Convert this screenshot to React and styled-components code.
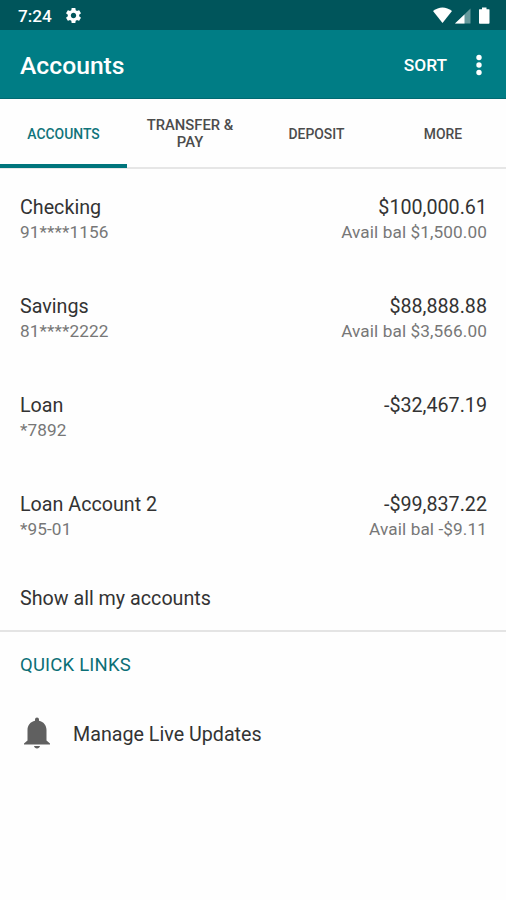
import React from "react";
import styled, { createGlobalStyle } from "styled-components";

const GlobalStyle = createGlobalStyle`
  * { box-sizing: border-box; }
  body { margin: 0; background: #fefefe; font-family: Roboto, sans-serif; }
`;

const Screen = styled.div`
  width: 506px;
  height: 900px;
  display: flex;
  flex-direction: column;
  background: #fefefe;
  overflow: hidden;
  white-space: nowrap;
`;

const StatusBar = styled.header`
  height: 30px;
  flex: none;
  display: flex;
  align-items: center;
  padding: 1px 15px 0 18px;
  background: #00555b;
  color: #fff;
`;

const Clock = styled.span`
  width: 46px;
  font-size: 17.2px;
  font-weight: 500;
  line-height: 20px;
`;

const StatusIcons = styled.div`
  margin-left: auto;
  display: flex;
`;

const AppBar = styled.div`
  height: 69px;
  flex: none;
  display: flex;
  align-items: center;
  padding: 2px 24px 0 20px;
  background: #007d85;
  border-bottom: 1px solid #006a72;
  color: #fff;
`;

const Title = styled.h1`
  margin: 2px 0 0;
  font-size: 24.7px;
  font-weight: 500;
  line-height: 30px;
`;

const SortButton = styled.button`
  margin: 0 29px 0 auto;
  padding: 0;
  border: 0;
  background: none;
  color: inherit;
  font: 500 17.3px/24px Roboto, sans-serif;
`;

const Tabs = styled.nav`
  height: 70px;
  flex: none;
  display: grid;
  grid-template-columns: 127px 126px 127px 126px;
  border-bottom: 2px solid #e6e6e6;
`;

const Tab = styled.div`
  height: ${(p) => (p.$active ? "69px" : "68px")};
  display: flex;
  align-items: center;
  justify-content: center;
  padding-top: ${(p) => (p.$active ? "5px" : "2px")};
  border-bottom: ${(p) => (p.$active ? "4px solid #00757c" : "0")};
  color: ${(p) => (p.$active ? "#10747b" : "#4c4c4c")};
  font-size: ${(p) => (p.$wide ? "14.8px" : "13.9px")};
  font-weight: 500;
  line-height: 17px;
  text-align: center;
  white-space: pre-line;
`;

const AccountList = styled.main`
  flex: none;
  display: flex;
  flex-direction: column;
`;

const AccountRow = styled.section`
  height: 99px;
  display: flex;
  justify-content: space-between;
  padding: 26px 19px 0 20px;
`;

const Column = styled.div`
  text-align: ${(p) => (p.$end ? "right" : "left")};
`;

const Primary = styled.div`
  font-size: 19.7px;
  line-height: 25px;
  color: #333;
`;

const Secondary = styled.div`
  font-size: 17.2px;
  line-height: 24px;
  letter-spacing: 0.1px;
  color: #777;
`;

const ShowAll = styled.div`
  height: 67px;
  padding: 21px 20px 0;
  border-bottom: 2px solid #e4e4e4;
`;

const QuickTitle = styled.h2`
  margin: 21px 0 0 20px;
  font-size: 18.5px;
  font-weight: 400;
  letter-spacing: 0.2px;
  line-height: 24px;
  color: #0b6f76;
`;

const QuickLink = styled.div`
  display: flex;
  align-items: center;
  height: 40px;
  margin-top: 36px;
  padding-left: 17px;
`;

const LinkText = styled.div`
  padding: 2px 0 0 16px;
`;

const accounts = [
  { name: "Checking", number: "91****1156", balance: "$100,000.61", available: "Avail bal $1,500.00" },
  { name: "Savings", number: "81****2222", balance: "$88,888.88", available: "Avail bal $3,566.00" },
  { name: "Loan", number: "*7892", balance: "-$32,467.19" },
  { name: "Loan Account 2", number: "*95-01", balance: "-$99,837.22", available: "Avail bal -$9.11" },
];

const tabs = ["ACCOUNTS", "TRANSFER &\nPAY", "DEPOSIT", "MORE"];

const Gear = () => (
  <svg width="19" height="19" viewBox="0 0 24 24" fill="#fff">
    <path d="M19.14 12.94c.04-.3.06-.61.06-.94 0-.32-.02-.64-.07-.94l2.03-1.58c.18-.14.23-.41.12-.61l-1.92-3.32c-.12-.22-.37-.29-.59-.22l-2.39.96c-.5-.38-1.03-.7-1.62-.94l-.36-2.54c-.04-.24-.24-.41-.48-.41h-3.84c-.24 0-.43.17-.47.41l-.36 2.54c-.59.24-1.13.57-1.62.94l-2.39-.96c-.22-.08-.47 0-.59.22L2.74 8.87c-.12.21-.08.47.12.61l2.03 1.58c-.05.3-.09.63-.09.94s.02.64.07.94l-2.03 1.58c-.18.14-.23.41-.12.61l1.92 3.32c.12.22.37.29.59.22l2.39-.96c.5.38 1.03.7 1.62.94l.36 2.54c.05.24.24.41.48.41h3.84c.24 0 .44-.17.47-.41l.36-2.54c.59-.24 1.13-.56 1.62-.94l2.39.96c.22.08.47 0 .59-.22l1.92-3.32c.12-.22.07-.47-.12-.61l-2.01-1.58zM12 15.4c-1.88 0-3.4-1.52-3.4-3.4s1.520-3.400 3.400-3.400 3.400 1.520 3.400 3.400-1.520 3.400-3.400 3.400z" />
  </svg>
);

const SystemIcons = () => (
  <svg width="58" height="18" viewBox="0 0 58 18" fill="#fff">
    <path d="M0 4C6-0.7 13-0.7 19 4L9.500 16Z" />
    <path d="M22 16.500L37.500 1.500V16.500Z" fillOpacity=".4" />
    <path d="M22 16.500L31.500 7.500V16.500Z" />
    <path d="M46.500 2.200h2.500V.5h4.500v1.700h2.500q.5 0 .5.5v13.300q0 .8-.8.8H46.800q-.8 0-.8-.8V2.700q0-.5.5-.5Z" />
  </svg>
);

const Overflow = () => (
  <svg width="6" height="22" viewBox="0 0 6 22" fill="#fff">
    <circle cx="3" cy="3.500" r="2.700" />
    <circle cx="3" cy="11" r="2.700" />
    <circle cx="3" cy="18.500" r="2.700" />
  </svg>
);

const Bell = () => (
  <svg width="40" height="40" viewBox="0 0 40 40" fill="#606060">
    <path d="M18 6.500a2 2 0 0 1 4 0v1.200C26.500 8.700 29.500 12 29.500 17v10.500L33 30.500V31.500H7V30.500L10.500 27.500V17C10.500 12 13.500 8.700 18 7.700Z" />
    <path d="M17 33h6c-.3 1.600-1.500 2.500-3 2.500s-2.700-.9-3-2.500Z" />
  </svg>
);

export default function App() {
  return (
    <>
      <GlobalStyle />
      <Screen>
        <StatusBar>
          <Clock>7:24</Clock>
          <Gear />
          <StatusIcons><SystemIcons /></StatusIcons>
        </StatusBar>
        <AppBar>
          <Title>Accounts</Title>
          <SortButton>SORT</SortButton>
          <Overflow />
        </AppBar>
        <Tabs>
          {tabs.map((t, i) => <Tab key={t} $active={i === 0} $wide={i === 1}>{t}</Tab>)}
        </Tabs>
        <AccountList>
          {accounts.map((a) => (
            <AccountRow key={a.name}>
              <Column>
                <Primary>{a.name}</Primary>
                <Secondary>{a.number}</Secondary>
              </Column>
              <Column $end>
                <Primary>{a.balance}</Primary>
                {a.available && <Secondary>{a.available}</Secondary>}
              </Column>
            </AccountRow>
          ))}
          <ShowAll><Primary>Show all my accounts</Primary></ShowAll>
        </AccountList>
        <QuickTitle>QUICK LINKS</QuickTitle>
        <QuickLink>
          <Bell />
          <LinkText><Primary>Manage Live Updates</Primary></LinkText>
        </QuickLink>
      </Screen>
    </>
  );
}
